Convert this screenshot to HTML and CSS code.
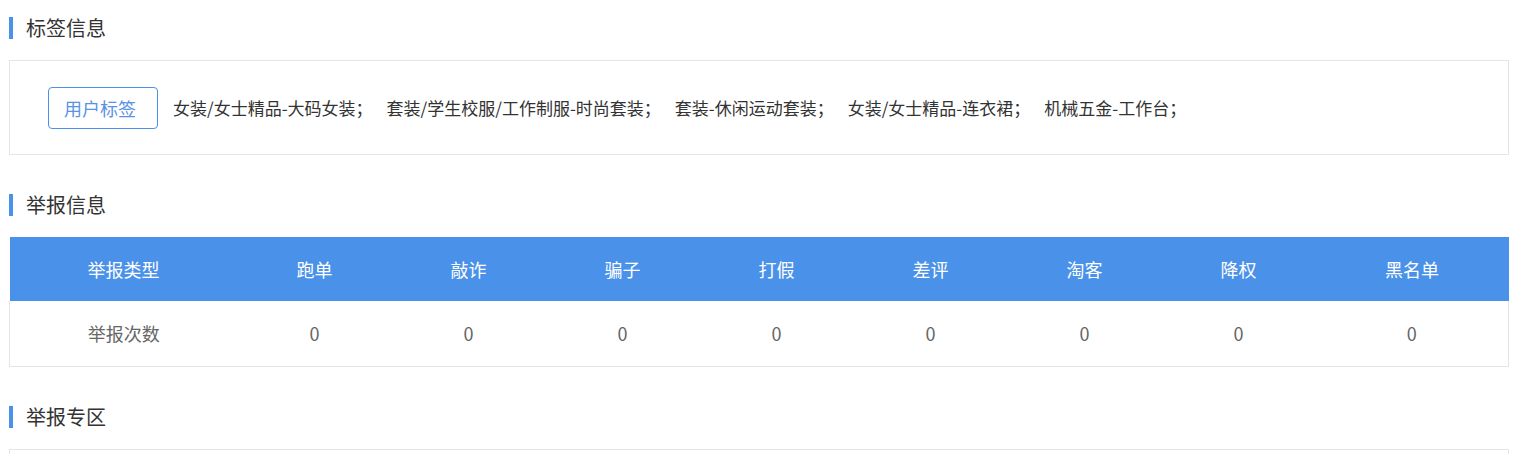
FILE: index.html
```html
<!DOCTYPE html>
<html lang="zh-CN">
<head>
    <meta charset="UTF-8">
    <meta name="viewport" content="width=device-width, initial-scale=1.0">
    <title>用户信息</title>
    <link rel="stylesheet" href="styles.css">
</head>
<body>
    <div class="page">
        <div class="section">
            <h2 class="section-title">标签信息</h2>
            <div class="tag-box">
                <button class="tag-btn">用户标签</button>
                <div class="tag-list">
                    <span class="tag-item">女装/女士精品-大码女装；</span>
                    <span class="tag-item">套装/学生校服/工作制服-时尚套装；</span>
                    <span class="tag-item">套装-休闲运动套装；</span>
                    <span class="tag-item">女装/女士精品-连衣裙；</span>
                    <span class="tag-item">机械五金-工作台；</span>
                </div>
            </div>
        </div>

        <div class="section">
            <h2 class="section-title">举报信息</h2>
            <table class="report-table">
                <colgroup>
                    <col class="col-first">
                    <col class="col-mid"><col class="col-mid"><col class="col-mid"><col class="col-mid">
                    <col class="col-mid"><col class="col-mid"><col class="col-mid">
                    <col>
                </colgroup>
                <thead>
                    <tr>
                        <th>举报类型</th>
                        <th>跑单</th>
                        <th>敲诈</th>
                        <th>骗子</th>
                        <th>打假</th>
                        <th>差评</th>
                        <th>淘客</th>
                        <th>降权</th>
                        <th>黑名单</th>
                    </tr>
                </thead>
                <tbody>
                    <tr>
                        <td>举报次数</td>
                        <td>0</td>
                        <td>0</td>
                        <td>0</td>
                        <td>0</td>
                        <td>0</td>
                        <td>0</td>
                        <td>0</td>
                        <td>0</td>
                    </tr>
                </tbody>
            </table>
        </div>

        <div class="section">
            <h2 class="section-title">举报专区</h2>
            <div class="zone-box"></div>
        </div>
    </div>
</body>
</html>
```

FILE: styles.css
```css
:root {
    --main-blue: #4a91e9;
    --line: #e5e5e5;
}

* {
    margin: 0;
    padding: 0;
    box-sizing: border-box;
    font-family: 'Microsoft YaHei', 'Noto Sans CJK SC', sans-serif;
}

body {
    background: #fff;
    color: #333;
    overflow: hidden;
}

.page {
    padding: 17px 27px 0 9px;
}

.section {
    margin-bottom: 39px;
}

.section-title {
    height: 22px;
    line-height: 22px;
    border-left: 4px solid var(--main-blue);
    padding-left: 13px;
    font-size: 20px;
    font-weight: normal;
    color: #333;
    margin-bottom: 21px;
}

.tag-box {
    display: flex;
    align-items: center;
    height: 95px;
    padding: 0 38px;
    border: 1px solid var(--line);
}

.tag-btn {
    width: 110px;
    height: 42px;
    padding-right: 6px;
    border: 1px solid var(--main-blue);
    border-radius: 4px;
    background: #fff;
    color: #5a93e6;
    font-size: 18px;
    margin-right: 15px;
    flex-shrink: 0;
}

.tag-list {
    display: flex;
    font-size: 17px;
    color: #333;
}

.tag-item {
    margin-right: 14px;
}

.report-table {
    width: 100%;
    border-collapse: collapse;
    table-layout: fixed;
    font-size: 18px;
}

.col-first { width: 228px; }
.col-mid { width: 154px; }

.report-table th {
    height: 64px;
    background: var(--main-blue);
    color: #fff;
    font-weight: normal;
}

.report-table td {
    height: 65px;
    text-align: center;
    color: #666;
    border-bottom: 1px solid var(--line);
}

.report-table td:first-child { border-left: 1px solid var(--line); }
.report-table td:last-child { border-right: 1px solid var(--line); }

.zone-box {
    height: 5px;
    border: 1px solid var(--line);
    border-bottom: none;
}
```
